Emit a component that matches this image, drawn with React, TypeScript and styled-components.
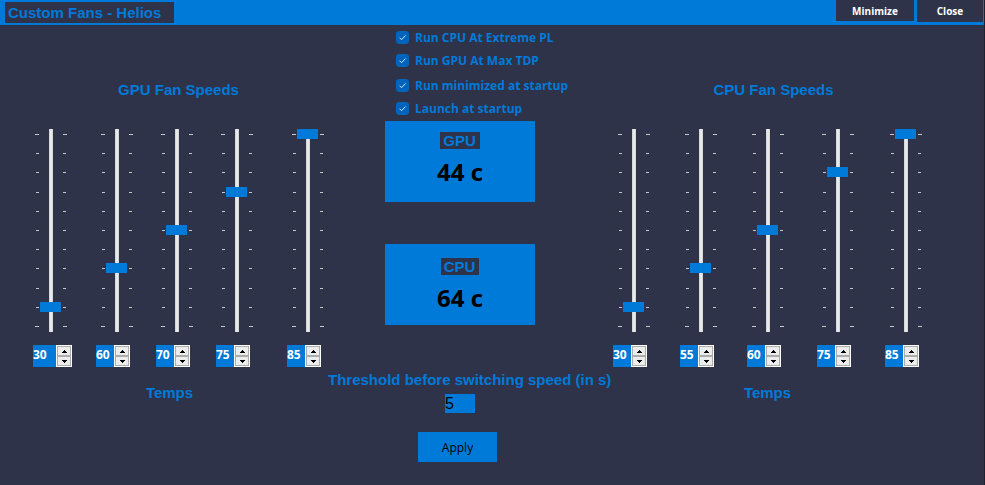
import React, { useState } from "react";
import styled, { createGlobalStyle } from "styled-components";

const NAVY = "#2e3349";
const BLUE = "#007ad9";
const SANS = '"Liberation Sans", Arial, sans-serif';
const HUMANIST = '"Open Sans", "Segoe UI", sans-serif';

const GlobalStyle = createGlobalStyle`
  *, *::before, *::after { box-sizing: border-box; }
  html, body { margin: 0; background: ${NAVY}; }
  button, input { font: inherit; color: inherit; border: 0; border-radius: 0; padding: 0; margin: 0; }
`;

const Window = styled.div`
  min-height: 100vh;
  background: ${NAVY};
  color: ${BLUE};
  font-family: ${HUMANIST};
  border-right: 1px solid #1e2130;
`;

const TitleBar = styled.header`
  display: flex;
  justify-content: space-between;
  align-items: flex-start;
  height: 25px;
  padding: 0 1px 0 5px;
  background: ${BLUE};
`;

const Title = styled.h1`
  margin: 2px 0 0;
  padding: 0 13px 0 3px;
  background: ${NAVY};
  font: bold 15px/21px ${SANS};
  white-space: nowrap;
`;

const WindowButtons = styled.div`
  display: flex;
  gap: 3px;
`;

const WindowButton = styled.button<{ $wide?: boolean }>`
  width: ${(p) => (p.$wide ? 78 : 66)}px;
  height: ${(p) => (p.$wide ? 21 : 22)}px;
  background: ${NAVY};
  color: #fff;
  font-size: 10px;
  font-weight: bold;
`;

const Content = styled.main`
  display: grid;
  grid-template-columns: minmax(0, 328fr) minmax(0, 264fr) minmax(0, 392fr);
  align-items: start;
`;

const Bank = styled.section<{ $side: "left" | "right" }>`
  padding: ${(p) => (p.$side === "left" ? "55px 4px 0 33px" : "55px 62px 0 21px")};
`;

const Heading = styled.h2<{ $indent: number }>`
  margin: 0;
  padding-left: ${(p) => p.$indent}px;
  font: bold 15px/20px ${SANS};
  text-align: center;
  white-space: nowrap;
`;

const Caption = styled.h3<{ $inset: number }>`
  margin: 0;
  padding-right: ${(p) => p.$inset}px;
  font: bold 15px/20px ${SANS};
  text-align: center;
`;

const Channels = styled.div<{ $columns: string }>`
  display: grid;
  grid-template-columns: ${(p) => p.$columns};
  margin: 29px 0 16px;
`;

const Channel = styled.div`
  display: flex;
  flex-direction: column;
  gap: 13px;
`;

const SliderBox = styled.div<{ $inset: number }>`
  display: flex;
  gap: 10px;
  height: 203px;
  margin-left: ${(p) => p.$inset}px;
`;

const TickColumn = styled.div<{ $align: "start" | "end" }>`
  display: flex;
  flex-direction: column;
  align-items: flex-${(p) => p.$align};
  justify-content: space-between;
  width: 4px;
  padding: 5px 0;
`;

const Tick = styled.span<{ $long: boolean }>`
  width: ${(p) => (p.$long ? 4 : 3)}px;
  height: 1px;
  background: #c8c9c9;
`;

const Slider = styled.input`
  appearance: none;
  writing-mode: vertical-lr;
  direction: rtl;
  width: 4px;
  height: 203px;
  padding-bottom: 1px;
  background: #e7eaea;
  border: 1px solid #d6d6d6;
  border-width: 0 1px;
  &::-webkit-slider-thumb {
    appearance: none;
    width: 21px;
    height: 10px;
    margin-right: 1px;
    background: ${BLUE};
    border: 0;
    border-radius: 0;
  }
`;

const Spinner = styled.div<{ $wide: boolean }>`
  display: flex;
  width: ${(p) => (p.$wide ? 39 : 34)}px;
  height: 22px;
  background: ${BLUE};
`;

const SpinnerField = styled.input`
  flex: 1;
  min-width: 0;
  height: 18px;
  background: ${BLUE};
  color: #fff;
  font-size: 12px;
  font-weight: bold;
`;

const SpinnerButtons = styled.div`
  display: grid;
  width: 16px;
  padding: 1px;
  background: #fff;
`;

const SpinnerButton = styled.button`
  display: flex;
  align-items: center;
  justify-content: center;
  background: #ececec;
  border: 1px solid #acacac;
`;

const Center = styled.section`
  display: flex;
  flex-direction: column;
  align-items: center;
  padding-top: 6px;
`;

const Options = styled.div`
  display: flex;
  flex-direction: column;
  gap: 12px;
  width: 150px;
  margin-bottom: 6px;
  padding-left: 11px;
`;

const OptionPair = styled.div`
  display: flex;
  flex-direction: column;
  gap: 10px;
`;

const Option = styled.label`
  display: flex;
  align-items: center;
  gap: 6px;
  height: 13px;
  font-size: 12px;
  line-height: 13px;
  font-weight: bold;
  white-space: nowrap;
`;

const CheckHolder = styled.span`
  display: grid;
  flex: none;
  width: 13px;
  height: 13px;
  > * { grid-area: 1 / 1; }
  > svg { pointer-events: none; visibility: hidden; }
  > input:checked + svg { visibility: visible; }
`;

const CheckInput = styled.input`
  appearance: none;
  width: 13px;
  height: 13px;
  border: 1px solid #0067c0;
  border-radius: 3px;
  &:checked { background: #0064be; }
`;

const Card = styled.div<{ $top: number }>`
  display: flex;
  flex-direction: column;
  align-items: center;
  width: 150px;
  height: 81px;
  padding-top: ${(p) => p.$top}px;
  background: ${BLUE};
  & + & { margin-top: 42px; }
`;

const Chip = styled.h2`
  margin: 0;
  padding: 0 4px 0 3px;
  background: ${NAVY};
  font: bold 15px/17px ${SANS};
`;

const Reading = styled.output`
  margin-top: 8px;
  color: #000;
  font-size: 24px;
  line-height: 30px;
  font-weight: bold;
`;

const ThresholdLabel = styled.label`
  align-self: flex-start;
  margin: 45px 0 4px;
  font: bold 15px/20px ${SANS};
  white-space: nowrap;
`;

const ThresholdField = styled.input`
  width: 30px;
  height: 19px;
  background: ${BLUE};
  color: #000;
  font: 16px/19px ${SANS};
`;

const ApplyButton = styled.button`
  width: 79px;
  height: 30px;
  margin: 19px 5px 0 0;
  background: ${BLUE};
  color: #000;
  font-size: 12px;
`;

type Setting = { temp: number; speed: number };

const GPU: Setting[] = [
  { temp: 30, speed: 1 },
  { temp: 60, speed: 3 },
  { temp: 70, speed: 5 },
  { temp: 75, speed: 7 },
  { temp: 85, speed: 10 },
];

const CPU: Setting[] = [
  { temp: 30, speed: 1 },
  { temp: 55, speed: 3 },
  { temp: 60, speed: 5 },
  { temp: 75, speed: 8 },
  { temp: 85, speed: 10 },
];

const TICKS = Array.from({ length: 11 }, (_, i) => i);

function Ticks({ align }: { align: "start" | "end" }) {
  return (
    <TickColumn $align={align} aria-hidden>
      {TICKS.map((i) => (
        <Tick key={i} $long={i === 0 || i === 10} />
      ))}
    </TickColumn>
  );
}

function FanChannel({ name, setting, wide = false }: { name: string; setting: Setting; wide?: boolean }) {
  const [speed, setSpeed] = useState(setting.speed);
  const [temp, setTemp] = useState(setting.temp);
  return (
    <Channel>
      <SliderBox $inset={wide ? 2 : 5}>
        <Ticks align="end" />
        <Slider
          type="range"
          min={0}
          max={10}
          value={speed}
          aria-label={`${name} speed`}
          onChange={(e) => setSpeed(Number(e.target.value))}
        />
        <Ticks align="start" />
      </SliderBox>
      <Spinner $wide={wide}>
        <SpinnerField
          inputMode="numeric"
          aria-label={`${name} temperature`}
          value={temp}
          onChange={(e) => setTemp(Number(e.target.value) || 0)}
        />
        <SpinnerButtons>
          <SpinnerButton type="button" aria-label={`Raise ${name}`} onClick={() => setTemp(temp + 1)}>
            <svg width="5" height="3" shapeRendering="crispEdges"><path d="M2 0h1v1h1v1h1v1H0V2h1V1h1z" /></svg>
          </SpinnerButton>
          <SpinnerButton type="button" aria-label={`Lower ${name}`} onClick={() => setTemp(temp - 1)}>
            <svg width="5" height="3" shapeRendering="crispEdges"><path d="M0 0h5v1H4v1H3v1H2V2H1V1H0z" /></svg>
          </SpinnerButton>
        </SpinnerButtons>
      </Spinner>
    </Channel>
  );
}

function CheckOption({ children }: { children: string }) {
  return (
    <Option>
      <CheckHolder>
        <CheckInput type="checkbox" defaultChecked />
        <svg width="13" height="13" fill="none" stroke="#d6e8fa" strokeWidth="1">
          <path d="M3.5 6.7l2 2 4-4.2" />
        </svg>
      </CheckHolder>
      {children}
    </Option>
  );
}

export default function App() {
  return (
    <>
      <GlobalStyle />
      <Window>
        <TitleBar>
          <Title>Custom Fans - Helios</Title>
          <WindowButtons>
            <WindowButton type="button" $wide>Minimize</WindowButton>
            <WindowButton type="button">Close</WindowButton>
          </WindowButtons>
        </TitleBar>
        <Content>
          <Bank $side="left">
            <Heading $indent={0}>GPU Fan Speeds</Heading>
            <Channels $columns="63fr 60fr 60fr 71fr 37px">
              {GPU.map((s, i) => (
                <FanChannel key={i} name={`GPU fan ${i + 1}`} setting={s} wide={i === 0} />
              ))}
            </Channels>
            <Caption $inset={18}>Temps</Caption>
          </Bank>
          <Center>
            <Options>
              <OptionPair>
                <CheckOption>Run CPU At Extreme PL</CheckOption>
                <CheckOption>Run GPU At Max TDP</CheckOption>
              </OptionPair>
              <OptionPair>
                <CheckOption>Run minimized at startup</CheckOption>
                <CheckOption>Launch at startup</CheckOption>
              </OptionPair>
            </Options>
            <Card $top={11}>
              <Chip>GPU</Chip>
              <Reading>44 c</Reading>
            </Card>
            <Card $top={14}>
              <Chip>CPU</Chip>
              <Reading>64 c</Reading>
            </Card>
            <ThresholdLabel htmlFor="threshold">Threshold before switching speed (in s)</ThresholdLabel>
            <ThresholdField id="threshold" defaultValue="5" />
            <ApplyButton type="button">Apply</ApplyButton>
          </Center>
          <Bank $side="right">
            <Heading $indent={12}>CPU Fan Speeds</Heading>
            <Channels $columns="67fr 67fr 70fr 68fr 37px">
              {CPU.map((s, i) => (
                <FanChannel key={i} name={`CPU fan ${i + 1}`} setting={s} />
              ))}
            </Channels>
            <Caption $inset={0}>Temps</Caption>
          </Bank>
        </Content>
      </Window>
    </>
  );
}
